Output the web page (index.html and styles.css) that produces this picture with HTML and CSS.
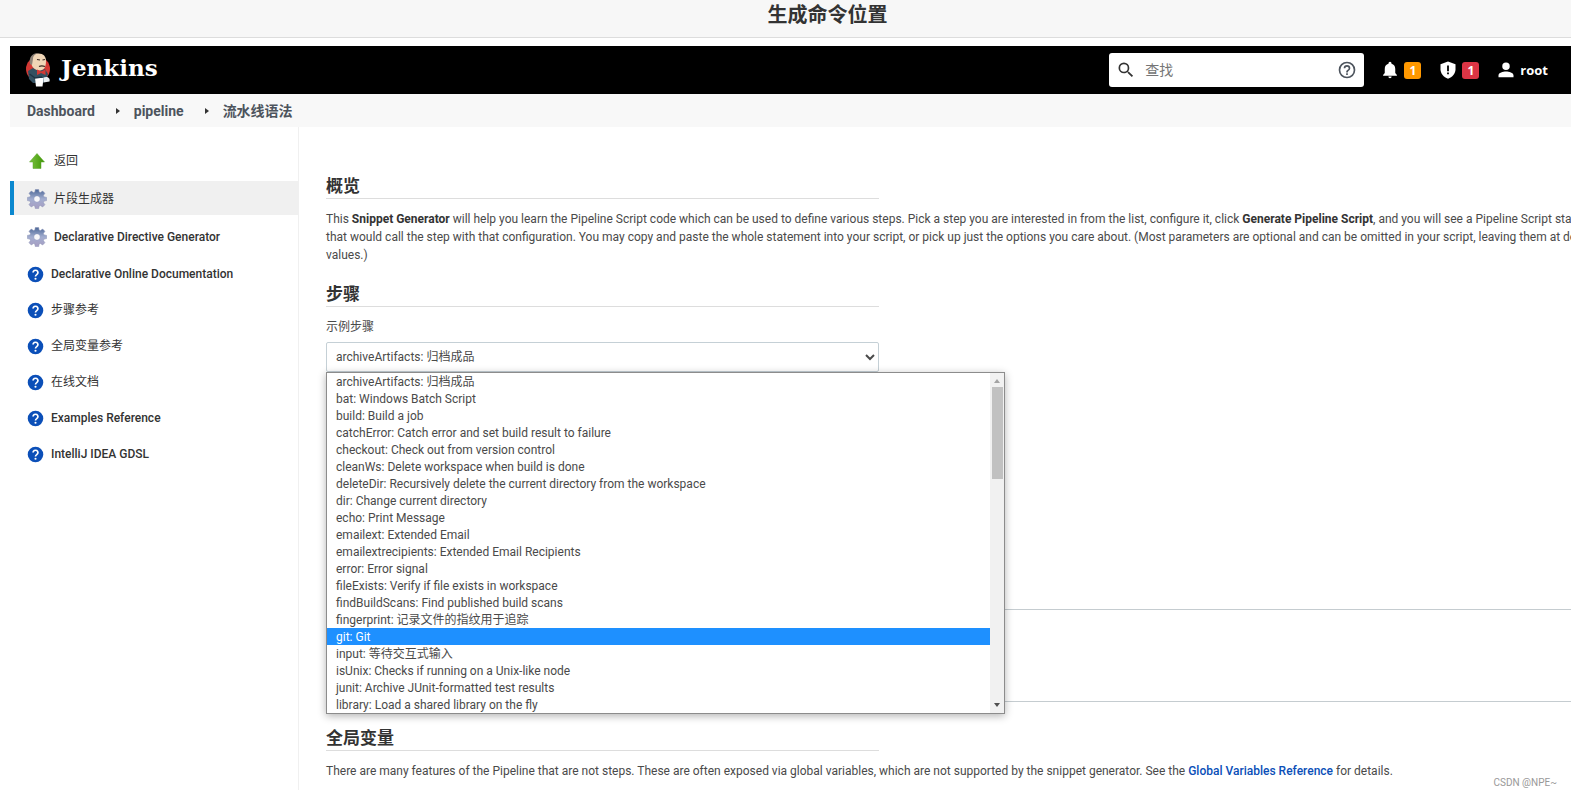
FILE: index.html
```html
<!DOCTYPE html>
<html lang="zh-CN">
<head>
<meta charset="utf-8">
<title>生成命令位置</title>
<link rel="stylesheet" href="styles.css">
</head>
<body>
<svg class="sprite" aria-hidden="true">
  <defs>
    <linearGradient id="gear-fill" x1="0" y1="0" x2="0" y2="1">
      <stop offset="0" stop-color="#4b6797"/><stop offset="0.5" stop-color="#a3aed0"/><stop offset="1" stop-color="#a79dc2"/>
    </linearGradient>
    <linearGradient id="arrow-fill" x1="0" y1="0" x2="1" y2="0">
      <stop offset="0" stop-color="#7cc142"/><stop offset="0.6" stop-color="#57a91c"/><stop offset="1" stop-color="#3c9206"/>
    </linearGradient>
  </defs>
  <symbol id="gear" viewBox="0 0 20 20">
    <path fill="url(#gear-fill)" stroke="#8890b4" stroke-width="0.5" fill-rule="evenodd" d="M8.3 0.5h3.4l.4 2.6 1.3.5 2.2-1.6 2.3 2.3-1.5 2.2.6 1.4 2.6.5v3.2l-2.6.5-.6 1.4 1.5 2.2-2.3 2.3-2.2-1.5-1.3.5-.4 2.6H8.3l-.5-2.6-1.3-.5-2.2 1.5L2 15.700l1.500-2.200-.6-1.400L.4 11.600V8.400L3 7.900l.5-1.400L2 4.300 4.300 2l2.200 1.600 1.300-.5zM10 7.200a2.800 2.800 0 1 0 0 5.600 2.800 2.800 0 0 0 0-5.600z"/>
    <circle cx="10" cy="10" r="2.700" fill="#f7f7fa"/>
  </symbol>
  <symbol id="help-blue" viewBox="0 0 16 16">
    <circle cx="8" cy="8" r="7.300" fill="#0b4fb8"/>
    <path d="M5.700 6.200a2.300 2.200 0 1 1 3.500 1.900C8.300 8.700 8 9 8 9.900" fill="none" stroke="#fff" stroke-width="1.600"/>
    <circle cx="8" cy="12" r="1" fill="#fff"/>
  </symbol>
</svg>

<div class="title-bar"><h1 class="title">生成命令位置</h1></div>

<div class="app">
  <header class="header">
    <a class="brand" href="#">
      <svg class="butler" viewBox="0 0 26 36" aria-hidden="true">
        <circle cx="13" cy="17" r="12" fill="#d33833"/>
        <path d="M3 19l5-3 6 3 6-2 3 5-2 6-3 3H8l-4-4z" fill="#335061"/>
        <path d="M6 9C6 4 9 1.500 13.500 1.500c5 0 7.500 3 7.500 7.500 0 6-2 9.500-6.500 9.500C10 18.500 6 15 6 9z" fill="#f0d6b7"/>
        <path d="M5 12C3.500 5 8 .5 14 1c-3.500.8-6 2.500-6 6l-1 6z" fill="#8d8177"/>
        <path d="M12 7.500l3 .5M17.500 8l2.500-.5M14 14.500c2-1 4-.8 6 0" stroke="#3b2a22" stroke-width="1.200" fill="none"/>
        <path d="M12 17.500l4 2 4.500-2v5.500l-4.500-2-4 2z" fill="#d33833"/>
        <path d="M10 26h8.500l-1 8.500h-6.500z" fill="#fff"/>
        <path d="M18.500 25.500c3.500-1.500 7 0 6 4l-6 1z" fill="#e9eef1"/>
        <path d="M4.500 22l5.500 4 7-1" stroke="#1f3444" stroke-width="1.500" fill="none"/>
      </svg>
      <span class="brand-name">Jenkins</span>
    </a>
    <form class="search" role="search">
      <svg class="search-icon" viewBox="0 0 24 24" aria-hidden="true"><path fill="#333" d="M15.500 14h-.79l-.28-.27A6.470 6.470 0 0 0 16 9.500 6.500 6.500 0 1 0 9.500 16c1.610 0 3.090-.59 4.230-1.570l.27.28v.79l5 4.990L20.490 19zm-6 0a4.500 4.500 0 1 1 0-9 4.500 4.500 0 0 1 0 9z"/></svg>
      <input class="search-input" type="search" placeholder="查找" aria-label="查找">
      <a class="search-help" href="#" aria-label="帮助"><svg viewBox="0 0 24 24" aria-hidden="true"><path fill="#4d545d" d="M11 18h2v-2h-2v2zm1-16a10 10 0 1 0 0 20 10 10 0 0 0 0-20zm0 18a8 8 0 1 1 0-16 8 8 0 0 1 0 16zm0-14a4 4 0 0 0-4 4h2a2 2 0 1 1 4 0c0 2-3 1.750-3 5h2c0-2.250 3-2.500 3-5a4 4 0 0 0-4-4z"/></svg></a>
    </form>
    <nav class="header-links">
      <a class="header-link" href="#">
        <svg viewBox="0 0 24 24" aria-hidden="true"><path fill="#fff" d="M12 23a2.200 2.200 0 0 0 2.200-2.200H9.800A2.200 2.200 0 0 0 12 23zm7-7v-5.500c0-3.400-1.800-6-5-6.800V3a2 2 0 0 0-4 0v.700c-3.200.8-5 3.400-5 6.800V16l-2.200 2.500v1.300h18.400v-1.300z"/></svg>
        <span class="badge badge-warning">1</span>
      </a>
      <a class="header-link" href="#">
        <svg viewBox="0 0 24 24" aria-hidden="true"><path fill="#fff" d="M12 0.500L2 4.200V11c0 5.800 4.200 10.800 10 12.500 5.800-1.700 10-6.700 10-12.500V4.200z"/><path fill="#000" d="M10.800 6h2.400v7.500h-2.400zM10.800 15.300h2.400v2.400h-2.400z"/></svg>
        <span class="badge badge-danger">1</span>
      </a>
      <a class="header-link" href="#">
        <svg viewBox="0 0 24 24" aria-hidden="true"><path fill="#fff" d="M12 12a5 5 0 1 0 0-10 5 5 0 0 0 0 10zm0 2c-4 0-10 1.700-10 5v2.500h20V19c0-3.300-6-5-10-5z"/></svg>
        <span>root</span>
      </a>
    </nav>
  </header>

  <nav class="breadcrumbs">
    <a href="#">Dashboard</a>
    <span class="caret"></span>
    <a href="#">pipeline</a>
    <span class="caret"></span>
    <a href="#">流水线语法</a>
  </nav>

  <div class="body">
    <nav class="sidebar">
      <a class="task zh" href="#"><svg class="task-icon" viewBox="0 0 20 20" aria-hidden="true"><path fill="url(#arrow-fill)" stroke="#5aa52a" stroke-width="0.500" d="M10 2.500l7.500 8.500H14v6.500H6V11H2.500z"/></svg>返回</a>
      <a class="task zh selected" href="#" aria-current="page"><svg class="task-icon" aria-hidden="true"><use href="#gear"/></svg>片段生成器</a>
      <a class="task" href="#"><svg class="task-icon" aria-hidden="true"><use href="#gear"/></svg>Declarative Directive Generator</a>
      <a class="task small" href="#"><svg class="task-icon" aria-hidden="true"><use href="#help-blue"/></svg>Declarative Online Documentation</a>
      <a class="task small zh" href="#"><svg class="task-icon" aria-hidden="true"><use href="#help-blue"/></svg>步骤参考</a>
      <a class="task small zh" href="#"><svg class="task-icon" aria-hidden="true"><use href="#help-blue"/></svg>全局变量参考</a>
      <a class="task small zh" href="#"><svg class="task-icon" aria-hidden="true"><use href="#help-blue"/></svg>在线文档</a>
      <a class="task small" href="#"><svg class="task-icon" aria-hidden="true"><use href="#help-blue"/></svg>Examples Reference</a>
      <a class="task small" href="#"><svg class="task-icon" aria-hidden="true"><use href="#help-blue"/></svg>IntelliJ IDEA GDSL</a>
    </nav>

    <main class="content">
      <h2 class="section-title">概览</h2>
      <p class="text">This <strong>Snippet Generator</strong> will help you learn the Pipeline Script code which can be used to define various steps. Pick a step you are interested in from the list, configure it, click <strong>Generate Pipeline Script</strong>, and you will see a Pipeline Script statement<br>that would call the step with that configuration. You may copy and paste the whole statement into your script, or pick up just the options you care about. (Most parameters are optional and can be omitted in your script, leaving them at default<br>values.)</p>

      <h2 class="section-title">步骤</h2>
      <label class="field-label" for="step">示例步骤</label>
      <div class="step-picker">
        <select class="step-select" id="step"><option>archiveArtifacts: 归档成品</option></select>
        <div class="popup">
          <ul class="options" role="listbox" aria-label="示例步骤">
            <li role="option">archiveArtifacts: 归档成品</li>
            <li role="option">bat: Windows Batch Script</li>
            <li role="option">build: Build a job</li>
            <li role="option">catchError: Catch error and set build result to failure</li>
            <li role="option">checkout: Check out from version control</li>
            <li role="option">cleanWs: Delete workspace when build is done</li>
            <li role="option">deleteDir: Recursively delete the current directory from the workspace</li>
            <li role="option">dir: Change current directory</li>
            <li role="option">echo: Print Message</li>
            <li role="option">emailext: Extended Email</li>
            <li role="option">emailextrecipients: Extended Email Recipients</li>
            <li role="option">error: Error signal</li>
            <li role="option">fileExists: Verify if file exists in workspace</li>
            <li role="option">findBuildScans: Find published build scans</li>
            <li role="option">fingerprint: 记录文件的指纹用于追踪</li>
            <li role="option" class="active" aria-selected="true">git: Git</li>
            <li role="option">input: 等待交互式输入</li>
            <li role="option">isUnix: Checks if running on a Unix-like node</li>
            <li role="option">junit: Archive JUnit-formatted test results</li>
            <li role="option">library: Load a shared library on the fly</li>
          </ul>
          <div class="scrollbar" aria-hidden="true">
            <span class="arrow-up"></span>
            <span class="thumb"></span>
            <span class="arrow-down"></span>
          </div>
        </div>
      </div>
      <div class="step-config"></div>
      <textarea class="output" aria-label="Pipeline Script" readonly></textarea>

      <h2 class="section-title">全局变量</h2>
      <p class="text">There are many features of the Pipeline that are not steps. These are often exposed via global variables, which are not supported by the snippet generator. See the <a href="#">Global Variables Reference</a> for details.</p>
    </main>
  </div>
</div>
<div class="watermark">CSDN @NPE~</div>
</body>
</html>
```

FILE: styles.css
```css
* { box-sizing: border-box; }

body {
  margin: 0;
  min-height: 100vh;
  display: flex;
  flex-direction: column;
  overflow: hidden;
  position: relative;
  background: #fff;
  color: #4a4a4a;
  font-family: Roboto, "Noto Sans CJK SC", sans-serif;
  font-size: 12px;
  line-height: 18px;
}

a { color: inherit; text-decoration: none; }

.sprite { position: absolute; width: 0; height: 0; }

.title-bar {
  height: 38px;
  padding-left: 84px;
  background: #f7f7f7;
  border-bottom: 1px solid #ddd;
}

.title {
  margin: 0;
  text-align: center;
  font-size: 20px;
  line-height: 30px;
  color: #333;
}

.app {
  flex: 1;
  display: flex;
  flex-direction: column;
  margin: 8px 0 0 10px;
}

.header {
  display: flex;
  align-items: center;
  height: 48px;
  padding: 0 23px 0 15px;
  background: #000;
  color: #fff;
}

.brand { display: flex; align-items: center; gap: 10px; margin-right: auto; }
.butler { width: 26px; height: 36px; }
.brand-name {
  padding-bottom: 4px;
  font-family: "DejaVu Serif", serif;
  font-weight: 700;
  font-size: 23px;
  line-height: 36px;
}

.search {
  display: flex;
  align-items: center;
  width: 255px;
  height: 34px;
  padding: 0 7px;
  background: #fff;
  border-radius: 3px;
}
.search-icon { width: 20px; height: 20px; flex: none; }
.search-input {
  flex: 1;
  min-width: 0;
  margin-left: 9px;
  padding: 0;
  border: 0;
  outline: 0;
  background: none;
  font: inherit;
  font-size: 14px;
}
.search-input::placeholder { color: #757575; opacity: 1; }
.search-help { display: flex; }
.search-help svg { width: 20px; height: 20px; }

.header-links { display: flex; gap: 18px; margin-left: 17px; }
.header-link {
  display: flex;
  align-items: center;
  gap: 5px;
  font-family: "Open Sans", sans-serif;
  font-size: 13px;
  font-weight: 700;
}
.header-link svg { width: 18px; height: 18px; }
.badge {
  width: 17px;
  height: 17px;
  border-radius: 3px;
  text-align: center;
  font-size: 12px;
  line-height: 17px;
}
.badge-warning { background: #ff9800; }
.badge-danger { background: #dc3545; }

.breadcrumbs {
  display: flex;
  align-items: center;
  height: 33px;
  padding-left: 17px;
  background: #f8f8f8;
  color: #4d545d;
  font-size: 14px;
  font-weight: 700;
}
.caret {
  margin: 0 14px 0 21px;
  border-left: 4px solid #333;
  border-top: 3px solid transparent;
  border-bottom: 3px solid transparent;
}

.body { flex: 1; display: flex; }

.sidebar {
  flex: none;
  display: flex;
  flex-direction: column;
  gap: 4px;
  width: 289px;
  padding-top: 16px;
  border-right: 1px solid #f0f0f0;
  color: #333;
  font-weight: 500;
}
.task {
  display: flex;
  align-items: center;
  gap: 7px;
  height: 34px;
  padding: 1px 0 0 13px;
  border-left: 4px solid transparent;
}
.task.zh { font-weight: 400; }
.task.selected { background: #f0f0f0; border-left-color: #0b88cf; }
.task-icon { width: 20px; height: 20px; }
.task.small { height: 32px; padding-top: 2px; }
.task.small .task-icon { width: 17px; height: 17px; }

.content {
  flex: 1;
  min-width: 0;
  padding: 47px 0 0 27px;
  overflow: hidden;
}

.section-title {
  width: 553px;
  max-width: 100%;
  margin: 0 0 11px;
  border-bottom: 1px solid #ddd;
  font-size: 17px;
  line-height: 24px;
  color: #333;
}
.text { margin: 0 0 18px; white-space: nowrap; }
.text strong { color: #333; }
.text a { color: #0b4fb8; font-weight: 500; }

.field-label { display: block; margin: 0 0 6px; }

.step-picker { position: relative; width: 553px; }
.step-select {
  display: block;
  width: 100%;
  height: 30px;
  padding: 0 4px 0 5px;
  border: 1px solid #c5d0d6;
  border-radius: 2px;
  background: #fff;
  color: #4a4a4a;
  font: inherit;
}

.popup {
  position: absolute;
  top: 30px;
  left: 0;
  display: flex;
  width: 679px;
  border: 1px solid #8c8c8c;
  background: #fff;
  box-shadow: 0 2px 8px rgba(0, 0, 0, 0.3);
}
.options { flex: 1; margin: 0; padding: 0; list-style: none; line-height: 18px; }
.options li { padding-left: 9px; height: 17px; }
.options .active { background: #1e90ff; color: #fff; }

.scrollbar {
  display: flex;
  flex-direction: column;
  align-items: center;
  width: 14px;
  padding: 6px 0;
  background: #f1f1f1;
}
.arrow-up { border: 3px solid transparent; border-top: 0; border-bottom: 4px solid #a3a3a3; }
.thumb { width: 11px; height: 92px; margin-top: 4px; background: #c1c1c1; }
.arrow-down { margin-top: auto; border: 3px solid transparent; border-bottom: 0; border-top: 4px solid #505050; }

.step-config { min-height: 237px; }

.output {
  display: block;
  width: calc(100% + 24px);
  height: 93px;
  margin-bottom: 24px;
  border: 1px solid #c5ccd0;
  resize: none;
}

.watermark { position: absolute; right: 14px; bottom: 6px; color: #999; font-size: 10px; }
```
